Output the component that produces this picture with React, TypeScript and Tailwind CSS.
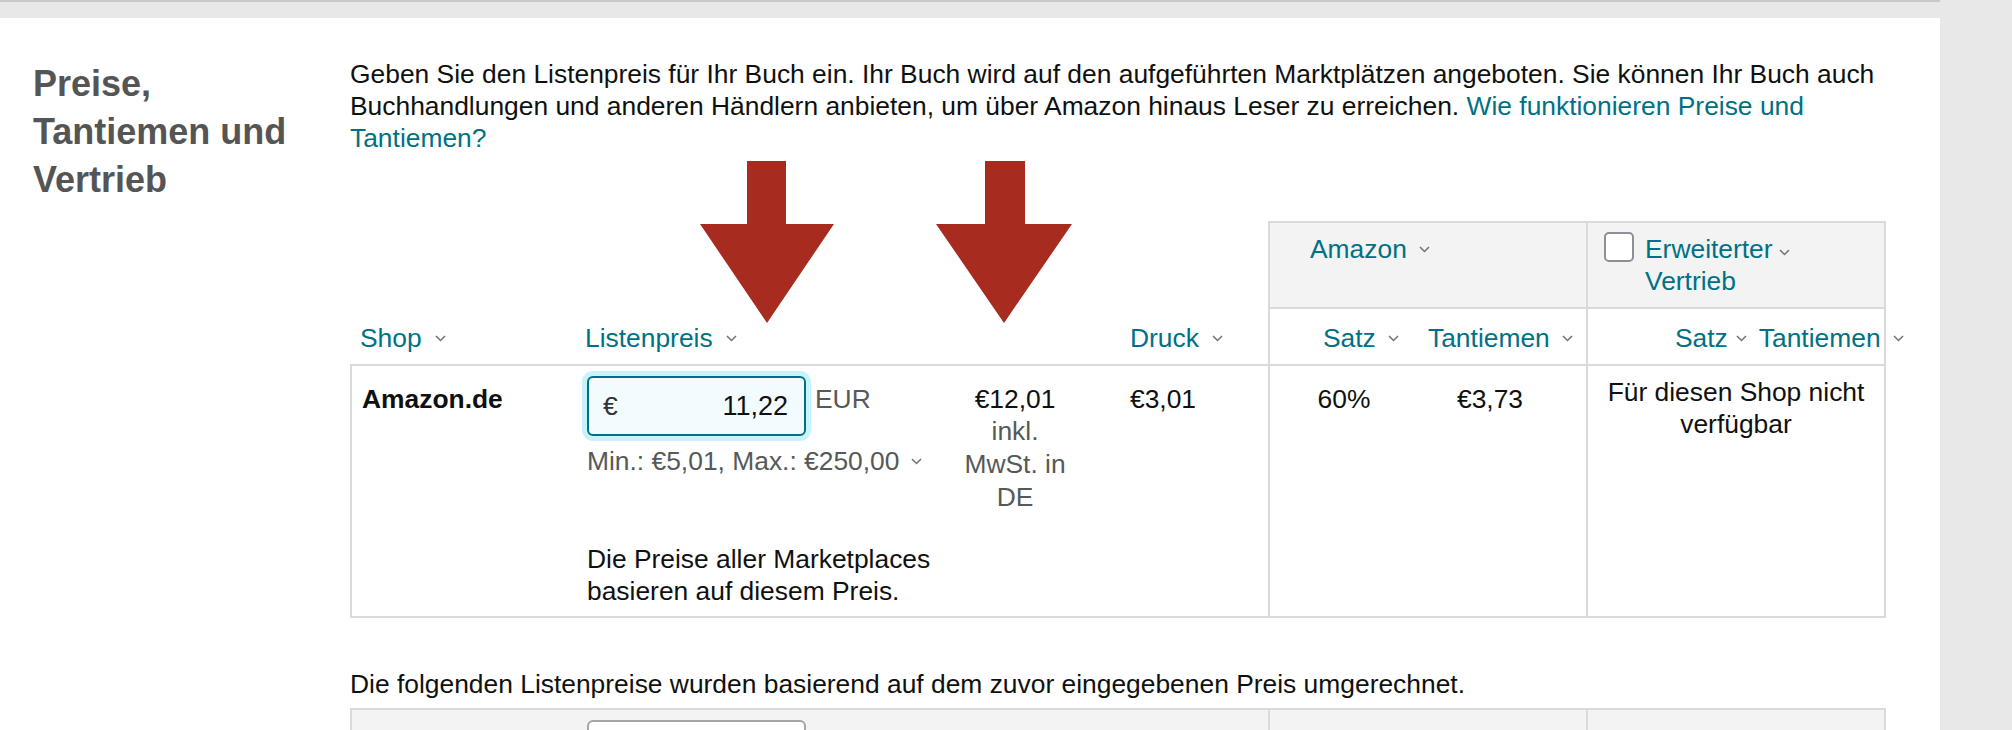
import React from 'react';

const teal = 'text-[#007185]';

function Chevron({ className = '' }: { className?: string }) {
  return (
    <svg width="11" height="7" viewBox="0 0 11 7" className={`inline-block ${className}`}>
      <path d="M1 1 L5.5 5.5 L10 1" fill="none" stroke="#6f7373" strokeWidth="1.5" />
    </svg>
  );
}

function Arrows() {
  return (
    <svg width="2012" height="730" className="pointer-events-none absolute left-0 top-0">
      <polygon points="747,161 786,161 786,224 834,224 767,323 700,224 747,224" fill="#a82b1f" />
      <polygon points="985,161 1025,161 1025,224 1072,224 1004,323 936,224 985,224" fill="#a82b1f" />
    </svg>
  );
}

function PriceTable() {
  return (
    <div className="mt-[67px] grid grid-cols-[225px_365px_150px_178px_150px_168px_300px]">
      {/* top group headers */}
      <div className="col-span-4 h-[88px]" />
      <div className="col-span-2 h-[88px] border-b-2 border-l-2 border-t-2 border-[#dadada] bg-[#f3f3f3] pl-[40px] pt-[10px]">
        <span className={teal}>
          Amazon
          <Chevron className="mb-[3px] ml-[12px]" />
        </span>
      </div>
      <div className="flex h-[88px] items-start border-2 border-[#dadada] bg-[#f3f3f3] pl-[16px] pt-[10px]">
        <span className="mt-[-1px] h-[30px] w-[30px] shrink-0 rounded-[5px] border-2 border-[#8d9096] bg-white" />
        <span className={`ml-[11px] w-[134px] ${teal}`}>Erweiterter Vertrieb</span>
        <Chevron className="mt-[16px]" />
      </div>

      {/* column headers */}
      <div className={`h-[55px] pl-[10px] pt-[13px] ${teal}`}>
        Shop
        <Chevron className="mb-[3px] ml-[13px]" />
      </div>
      <div className={`h-[55px] pl-[10px] pt-[13px] ${teal}`}>
        Listenpreis
        <Chevron className="mb-[3px] ml-[13px]" />
      </div>
      <div className="h-[55px]" />
      <div className={`h-[55px] pl-[40px] pt-[13px] ${teal}`}>
        Druck
        <Chevron className="mb-[3px] ml-[13px]" />
      </div>
      <div className={`h-[55px] border-l-2 border-[#dadada] pl-[53px] pt-[13px] ${teal}`}>
        Satz
        <Chevron className="mb-[3px] ml-[12px]" />
      </div>
      <div className={`h-[55px] pl-[10px] pt-[13px] ${teal}`}>
        Tantiemen
        <Chevron className="mb-[3px] ml-[12px]" />
      </div>
      <div className={`h-[55px] whitespace-nowrap border-x-2 border-[#dadada] pl-[87px] pt-[13px] ${teal}`}>
        Satz
        <Chevron className="mb-[3px] ml-[8px] mr-[12px]" />
        Tantiemen
        <Chevron className="mb-[3px] ml-[12px]" />
      </div>

      {/* Amazon.de row */}
      <div className="h-[254px] border-y-2 border-l-2 border-[#dadada] pl-[10px] pt-[17px] font-bold">Amazon.de</div>
      <div className="h-[254px] border-y-2 border-[#dadada] pl-[12px] pt-[10px]">
        <div className="flex items-start">
          <div className="flex h-[60px] w-[219px] items-center justify-between rounded-[6px] border-2 border-[#007185] bg-[#f2fcff] pl-[14px] pr-[16px] shadow-[0_0_0_5px_#c8f3fa]">
            <span className="text-[#333]">€</span>
            <span className="text-[27px]">11,22</span>
          </div>
          <span className="ml-[9px] mt-[7px] text-[#565959]">EUR</span>
        </div>
        <div className="mt-[9px] text-[#565959]">
          Min.: €5,01, Max.: €250,00
          <Chevron className="mb-[3px] ml-[12px]" />
        </div>
        <p className="mt-[66px] w-[360px]">Die Preise aller Marketplaces basieren auf diesem Preis.</p>
      </div>
      <div className="h-[254px] border-y-2 border-[#dadada] px-[22px] pt-[17px] text-center">
        <div>€12,01</div>
        <div className="leading-[33px] text-[#565959]">inkl. MwSt. in DE</div>
      </div>
      <div className="h-[254px] border-y-2 border-[#dadada] pl-[40px] pt-[17px]">€3,01</div>
      <div className="h-[254px] border-y-2 border-l-2 border-[#dadada] pt-[17px] text-center">60%</div>
      <div className="h-[254px] border-y-2 border-[#dadada] pl-[39px] pt-[17px]">€3,73</div>
      <div className="h-[254px] border-2 border-[#dadada] px-[15px] pt-[10px] text-center">Für diesen Shop nicht verfügbar</div>
    </div>
  );
}

function ConvertedTable() {
  return (
    <div className="mt-[8px] grid grid-cols-[225px_365px_150px_178px_318px_300px] bg-[#f3f3f3]">
      <div className="h-[80px] border-l-2 border-t-2 border-[#dadada]" />
      <div className="h-[80px] border-t-2 border-[#dadada] pl-[12px] pt-[10px]">
        <div className="h-[60px] w-[219px] rounded-[6px] border-2 border-[#a3a6a6] bg-white" />
      </div>
      <div className="h-[80px] border-t-2 border-[#dadada]" />
      <div className="h-[80px] border-t-2 border-[#dadada]" />
      <div className="h-[80px] border-l-2 border-t-2 border-[#dadada]" />
      <div className="h-[80px] border-x-2 border-t-2 border-[#dadada]" />
    </div>
  );
}

export default function App() {
  return (
    <div className="relative flex h-[730px] w-[2012px] overflow-hidden bg-[#e8e8e8] font-['Liberation_Sans',Arial,sans-serif] text-[26.4px] leading-[32px] text-[#0f1111]">
      <div className="flex w-[1940px] flex-col">
        <div className="h-[18px] shrink-0 border-t-2 border-[#c9c9c9]" />
        <div className="flex flex-1 bg-white pt-[40px]">
          <div className="w-[350px] shrink-0 pl-[33px]">
            <h2 className="mt-[2px] w-[280px] text-[36px] font-bold leading-[48px] text-[#555555]">
              Preise, Tantiemen und Vertrieb
            </h2>
          </div>
          <div className="w-[1536px] shrink-0">
            <p>
              Geben Sie den Listenpreis für Ihr Buch ein. Ihr Buch wird auf den aufgeführten Marktplätzen angeboten. Sie
              können Ihr Buch auch Buchhandlungen und anderen Händlern anbieten, um über Amazon hinaus Leser zu
              erreichen. <a className={teal}>Wie funktionieren Preise und Tantiemen?</a>
            </p>
            <PriceTable />
            <p className="mt-[50px]">
              Die folgenden Listenpreise wurden basierend auf dem zuvor eingegebenen Preis umgerechnet.
            </p>
            <ConvertedTable />
          </div>
        </div>
      </div>
      <div className="flex-1" />
      <Arrows />
    </div>
  );
}
